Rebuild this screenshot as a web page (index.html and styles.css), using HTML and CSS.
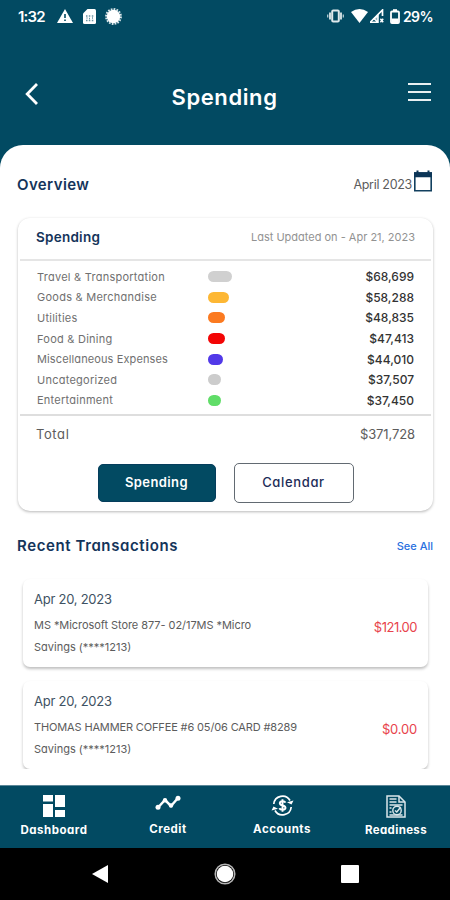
FILE: index.html
```html
<!DOCTYPE html>
<html lang="en">
<head>
  <meta charset="UTF-8" />
  <meta name="viewport" content="width=device-width, initial-scale=1.0">
  <title>Spending</title>
  <link rel="stylesheet" href="styles.css">
</head>
<body>

<div class="phone">
  <div class="status">
    <span class="time">1:32</span>
    <svg class="warn" width="16" height="14" viewBox="0 0 16 14"><path d="M8 0 16 14H0z" fill="#fff"/><path d="M8 5v4M8 10.5v1.5" stroke="#024a62" stroke-width="1.6"/></svg>
    <svg class="sim" width="13" height="15" viewBox="0 0 13 15"><path d="M4.500 0H11.500Q13 0 13 1.500V13.500Q13 15 11.500 15H1.500Q0 15 0 13.500V4.500z" fill="#fff"/><path d="M3 7h1.500M5.800 7h1.500M8.800 7h1.500M3 11.500h1.500M5.800 11.500h1.500M8.800 11.500h1.500M3.500 9h1M6 9.500h1M9 9h1" stroke="#6a93a2" stroke-width="1.300"/></svg>
    <svg class="sun" width="17" height="17" viewBox="0 0 17 17"><circle cx="8.500" cy="8.500" r="7.400" fill="none" stroke="#dce7eb" stroke-width="2" stroke-dasharray="1.700 1.200"/><circle cx="8.500" cy="8.500" r="6.700" fill="#fff"/></svg>
    <div class="status-right">
      <svg width="17" height="14" viewBox="0 0 17 14"><rect x="5.200" y="1.400" width="6.600" height="11.200" rx="1" fill="none" stroke="#dfe9ec" stroke-width="2"/><path d="M3 3.500v7M14 3.500v7" stroke="#dfe9ec" stroke-width="1.800"/><path d="M.7 5.500v3M16.300 5.500v3" stroke="#b3cad2" stroke-width="1.300"/></svg>
      <svg class="wifi" width="17" height="14" viewBox="0 0 17 14"><path d="M0 3Q8.500-3 17 3L8.500 14z" fill="#fff"/></svg>
      <svg class="signal" width="15" height="14" viewBox="0 0 15 14"><path d="M1.500 13 13.500 1V7" fill="none" stroke="#fff" stroke-width="1.700"/><path d="M1 13.200h8.500M5 9.800l4 3.400V6.500z" stroke="#fff" stroke-width="1.500" fill="#8fb0bc"/><path d="M11.400 9.800l2.800 3.400M14.200 9.800l-2.800 3.400" stroke="#fff" stroke-width="1.500"/></svg>
      <svg class="battery" width="10" height="15" viewBox="0 0 10 15"><path d="M3 1.200h4" stroke="#fff" stroke-width="2"/><rect x="1" y="2.500" width="8" height="11.500" rx="1" fill="none" stroke="#fff" stroke-width="1.800"/><path d="M1.500 9.500h7V14h-7z" fill="#fff"/></svg>
      <span class="percent">29%</span>
    </div>
  </div>

  <div class="header">
    <svg width="14" height="24" viewBox="0 0 14 24"><path d="M12 2 2.200 12 12 22" fill="none" stroke="#fff" stroke-width="2.800"/></svg>
    <h1>Spending</h1>
    <div class="menu"><i></i><i></i><i></i></div>
  </div>

  <div class="content">
    <div class="overview">
      <h2>Overview</h2>
      <div class="month">
        <span>April 2023</span>
        <svg width="20" height="23" viewBox="0 0 20 23"><path d="M1.800 3H18.200V20.800H1.800z" fill="none" stroke="#12405f" stroke-width="1.600"/><path d="M1 2.300h18v5H1zM3.500.5h2v3h-2zM14.500.5h2v3h-2z" fill="#0b3557"/></svg>
      </div>
    </div>

    <div class="card">
      <div class="card-head">
        <h3>Spending</h3>
        <span class="updated">Last Updated on - Apr 21, 2023</span>
      </div>
      <div class="rows">
        <div class="row"><span class="name">Travel &amp; Transportation</span><i class="pill p1"></i><b>$68,699</b></div>
        <div class="row"><span class="name">Goods &amp; Merchandise</span><i class="pill p2"></i><b>$58,288</b></div>
        <div class="row"><span class="name">Utilities</span><i class="pill p3"></i><b>$48,835</b></div>
        <div class="row"><span class="name">Food &amp; Dining</span><i class="pill p4"></i><b>$47,413</b></div>
        <div class="row"><span class="name misc">Miscellaneous Expenses</span><i class="pill p5"></i><b>$44,010</b></div>
        <div class="row"><span class="name">Uncategorized</span><i class="pill p6"></i><b>$37,507</b></div>
        <div class="row"><span class="name">Entertainment</span><i class="pill p7"></i><b>$37,450</b></div>
      </div>
      <div class="total"><span class="label">Total</span><span class="sum">$371,728</span></div>
      <div class="buttons">
        <button class="btn active">Spending</button>
        <button class="btn">Calendar</button>
      </div>
    </div>

    <div class="recent">
      <h2>Recent Transactions</h2>
      <a class="see-all">See All</a>
    </div>

    <div class="tx-list">
      <div class="tx">
        <div class="tx-info">
          <div class="date">Apr 20, 2023</div>
          <div class="desc">MS *Microsoft Store 877- 02/17MS *Micro</div>
          <div class="acct">Savings (****1213)</div>
        </div>
        <span class="amount">$121.00</span>
      </div>
      <div class="tx">
        <div class="tx-info">
          <div class="date">Apr 20, 2023</div>
          <div class="desc long">THOMAS HAMMER COFFEE #6 05/06 CARD #8289</div>
          <div class="acct">Savings (****1213)</div>
        </div>
        <span class="amount zero">$0.00</span>
      </div>
    </div>
  </div>

  <div class="tabs">
    <div class="tab low">
      <svg width="22" height="22" viewBox="0 0 22 22"><path d="M0 0h10v6.500H0zM0 9h10v13H0zM12 0h10v12H12zM12 15h10v7H12z" fill="#fff"/></svg>
      <span>Dashboard</span>
    </div>
    <div class="tab">
      <svg width="26" height="22" viewBox="0 0 26 22"><path d="M3 12.500 10 5l6 6L23 3" fill="none" stroke="#fff" stroke-width="2.500"/><g fill="#fff"><circle cx="3" cy="12.300" r="2.500"/><circle cx="10" cy="5.200" r="2.200"/><circle cx="16" cy="10.500" r="2.200"/><circle cx="23" cy="3.200" r="2.500"/></g></svg>
      <span class="credit">Credit</span>
    </div>
    <div class="tab">
      <svg width="23" height="22" viewBox="0 0 23 22"><g fill="none" stroke="#fff" stroke-width="1.700"><path d="M2.800 9A8.700 8.700 0 0 1 19 5.500M20.200 12A8.700 8.700 0 0 1 4 15.500"/><path d="M14.500 7.700C13.500 5.700 9 5.700 8.800 8.200C8.800 11.200 14.500 9.800 14.500 12.800C14.500 15.300 9.500 15.500 8.300 13.200M11.500 4.300v12.500" stroke-width="1.900"/></g><path d="M16 7.300 22.500 5.500 20.500 9.500zM7 13.700.5 15.500 2.500 11.500z" fill="#fff"/></svg>
      <span class="accounts">Accounts</span>
    </div>
    <div class="tab low">
      <svg width="20" height="23" viewBox="0 0 20 23"><g fill="none" stroke="#dbe6ea" stroke-width="1.500"><path d="M1 1h12l6 6v15H1z"/><path d="M13 1v6h6M3.500 4h7M3.500 7h7M3.500 10h13M3.500 13h2M3.500 17h2M3.500 20h13"/><circle cx="11" cy="15.500" r="4.200" stroke-width="1.400"/><path d="m9 15.500 1.800 1.500 4-5"/></g></svg>
      <span class="ready">Readiness</span>
    </div>
  </div>

  <div class="sysbar">
    <svg width="16" height="18" viewBox="0 0 16 18"><path d="M16 0v18L0 9z" fill="#fff"/></svg>
    <svg width="22" height="22" viewBox="0 0 22 22"><circle cx="11" cy="11" r="9.800" fill="none" stroke="#b5b5b5" stroke-width="1.500"/><circle cx="11" cy="11" r="8.300" fill="#fff"/></svg>
    <svg width="18" height="18" viewBox="0 0 18 18"><rect width="18" height="18" rx="1" fill="#fff"/></svg>
  </div>
</div>

</body>
</html>
```

FILE: styles.css
```css
* {
  box-sizing: border-box;
}
body {
  margin: 0;
  font-family: Inter, "Open Sans", sans-serif;
  font-feature-settings: "cv11";
  background: #024a62;
  color: #5c5c5c;
}
h1, h2, h3 {
  margin: 0;
  font-weight: 600;
}
svg {
  display: block;
  flex: none;
}
span, h1, h2, h3, b, a {
  white-space: nowrap;
}
.phone {
  width: 450px;
  height: 900px;
  display: flex;
  flex-direction: column;
  overflow: hidden;
}

/* android status bar */
.status {
  height: 32px;
  display: flex;
  align-items: center;
  padding: 0 17px 0 18px;
  color: #fff;
}
.time {
  width: 39px;
  font-size: 15px;
  font-weight: 600;
  letter-spacing: -0.8px;
}
.sim {
  margin-left: 10px;
}
.sun {
  margin-left: 9px;
}
.status-right {
  margin-left: auto;
  display: flex;
  align-items: center;
}
.wifi {
  margin-left: 7px;
}
.signal {
  margin-left: 1px;
}
.battery {
  margin-left: 6px;
}
.percent {
  width: 30px;
  margin-left: 3px;
  font-size: 14px;
  font-weight: 600;
  letter-spacing: -0.6px;
}

.header {
  height: 113px;
  display: flex;
  justify-content: space-between;
  padding: 50px 19px 0 25px;
}
.header h1 {
  color: #fff;
  font-size: 22px;
  line-height: 30px;
  letter-spacing: 0.6px;
  padding-left: 2px;
}
.menu {
  width: 23px;
  padding-top: 1px;
}
.menu i {
  display: block;
  height: 2px;
  margin-bottom: 6px;
  background: #e9f0f2;
}

.content {
  height: 640px;
  background: #fff;
  border-radius: 23px 23px 0 0;
  padding: 0 17px;
}
.overview {
  height: 73px;
  display: flex;
  justify-content: space-between;
  padding-top: 25px;
}
h2 {
  color: #14345a;
  font-size: 15px;
  line-height: 30px;
  letter-spacing: 0.4px;
}
.month {
  display: flex;
  font-size: 12.5px;
  line-height: 29px;
  letter-spacing: -0.3px;
}
.month svg {
  margin-left: 1px;
}

.card {
  height: 293px;
  margin-left: 1px;
  border-radius: 12px;
  background: #fff;
  box-shadow: 0 1px 3px rgba(0,0,0,0.28);
  padding: 0 2px;
}
.card-head {
  height: 43px;
  display: flex;
  justify-content: space-between;
  padding: 4px 16px 0;
  line-height: 30px;
  border-bottom: 2px solid #e5e5e5;
}
h3 {
  color: #14345a;
  font-size: 13.5px;
  letter-spacing: 0.25px;
}
.updated {
  font-size: 11px;
  color: #929292;
}
.rows {
  height: 155px;
  padding: 5.500px 17px 0;
  border-bottom: 2px solid #dedede;
}
.row {
  height: 20.6px;
  display: flex;
  align-items: center;
  font-size: 11px;
}
.name {
  width: 171px;
  color: #707070;
  letter-spacing: 0.25px;
}
.misc {
  letter-spacing: 0.12px;
}
.row b {
  margin-left: auto;
  color: #333;
  font-size: 12px;
  font-weight: 500;
}
.pill {
  width: 13px;
  height: 11px;
  border-radius: 6px;
}
.p1 {
  width: 24px;
  background: #d0d0d0;
}
.p2 {
  width: 21px;
  background: #fdb734;
}
.p3 {
  width: 17px;
  background: #fb7a20;
}
.p4 {
  width: 17px;
  background: #f30505;
}
.p5 {
  width: 15px;
  background: #5139e8;
}
.p6 {
  background: #ccc;
}
.p7 {
  background: #60dd68;
}
.total {
  display: flex;
  justify-content: space-between;
  padding: 0 16px;
  line-height: 36px;
  font-size: 13px;
}
.label {
  letter-spacing: 0.6px;
}
.sum {
  letter-spacing: -0.1px;
}
.buttons {
  display: flex;
  justify-content: center;
  gap: 18px;
  padding-top: 11px;
}
.btn {
  width: 120px;
  height: 40px;
  padding: 0 0 3px;
  border: 1px solid #626a72;
  border-radius: 5px;
  background: #fff;
  color: #1d2c58;
  font: 500 13px Inter, sans-serif;
  font-feature-settings: "cv11";
  letter-spacing: 0.65px;
}
.btn.active {
  width: 118px;
  height: 38px;
  margin-top: 1px;
  border-color: #053d5c;
  background: #024a62;
  color: #fff;
  font-weight: 600;
  letter-spacing: 0.4px;
}

.recent {
  display: flex;
  justify-content: space-between;
  margin-top: 20px;
}
.recent h2 {
  letter-spacing: 0.6px;
}
.see-all {
  color: #2a70e0;
  font-size: 11px;
  font-weight: 500;
  line-height: 30px;
}

/* scroll area, ends just under the second item */
.tx-list {
  height: 208px;
  padding: 18px 5px 0 6px;
  overflow: hidden;
}
.tx {
  height: 88px;
  margin-bottom: 14px;
  display: flex;
  justify-content: space-between;
  padding: 7px 11px 0;
  border-radius: 7px;
  box-shadow: 0 2px 3px rgba(0,0,0,0.25);
}
.date {
  font-size: 13px;
  line-height: 26px;
  letter-spacing: -0.25px;
  color: #3e5263;
}
.desc {
  font-size: 11px;
  line-height: 26px;
  letter-spacing: -0.06px;
}
.desc.long {
  letter-spacing: -0.14px;
}
.acct {
  font-size: 11px;
  line-height: 19px;
}
.amount {
  color: #e8434c;
  font-size: 13px;
  line-height: 82px;
  letter-spacing: -0.5px;
}
.amount.zero {
  letter-spacing: -0.2px;
}

.tabs {
  height: 63px;
  display: flex;
  justify-content: space-between;
  padding: 9px 18px 0;
  border-top: 1px solid #5b8798;
  background: #024a62;
  color: #fff;
  font-size: 11.5px;
  font-weight: 700;
}
.tab {
  width: 72px;
  display: flex;
  flex-direction: column;
  align-items: center;
}
.tab span {
  line-height: 24px;
  letter-spacing: 0.5px;
}
.tab.low span {
  line-height: 26px;
}
.tab.low .ready {
  line-height: 24px;
  letter-spacing: 0.35px;
}
.sysbar {
  height: 52px;
  display: flex;
  align-items: center;
  justify-content: space-between;
  padding: 0 91px 0 92px;
  background: #000;
}
```
